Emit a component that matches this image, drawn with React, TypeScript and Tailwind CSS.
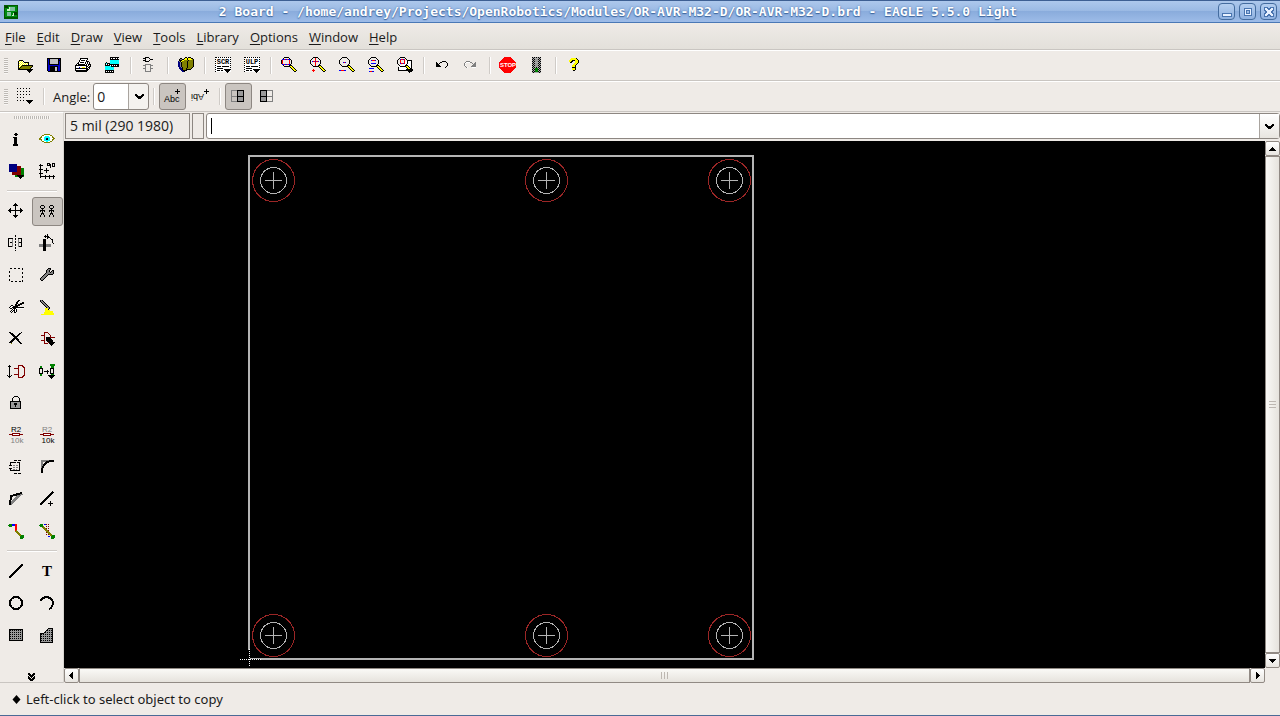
import type { ReactNode } from 'react'

const COLORS: Record<string, string> = {
  k: '#000000',
  w: '#ffffff',
  y: '#ffff00',
  o: '#808000',
  b: '#0000c8',
  n: '#000080',
  r: '#ff0000',
  m: '#800000',
  g: '#808080',
  l: '#c0c0c0',
  c: '#00ffff',
  G: '#008000',
}

// draws a bitmap icon, one character for each pixel
function Pixels({ x, y, rows }: { x: number; y: number; rows: string[] }) {
  const paths: Record<string, string> = {}
  rows.forEach((row, j) =>
    row.split('').forEach((c, i) => {
      if (COLORS[c]) paths[c] = (paths[c] || '') + `M${x + i} ${y + j}h1v1h-1z`
    })
  )
  return (
    <>
      {Object.keys(paths).map((c) => (
        <path key={c} d={paths[c]} fill={COLORS[c]} stroke="none" />
      ))}
    </>
  )
}

function Icon({ children }: { children: ReactNode }) {
  return (
    <svg
      width="21"
      height="21"
      viewBox="0 0 21 21"
      fill="none"
      stroke="#000"
      shapeRendering="crispEdges"
      className="block shrink-0"
      aria-hidden="true"
    >
      {children}
    </svg>
  )
}

const MenuMark = () => <path d="M12 14h7v1h-1v1h-1v1h-1v1h-1v-1h-1v-1h-1v-1h-1z" fill="#000" stroke="none" />

const Lens = ({ children }: { children?: ReactNode }) => (
  <>
    <Pixels
      x={3}
      y={2}
      rows={[
        '...kkkkk........',
        '..k.....k.......',
        '.k.......k......',
        'k.........k.....',
        'k.........k.....',
        'k.........k.....',
        'k.........k.....',
        '.k.......k......',
        '..k.....kkk.....',
        '...kkkkkkyyk....',
        '.........kyyk...',
        '..........kyyk..',
        '...........kyyk.',
        '............kyyk',
        '.............kk.',
      ]}
    />
    {children}
  </>
)

const icons: Record<string, ReactNode> = {
  open: (
    <Pixels
      x={4}
      y={5}
      rows={[
        '.kkkk..........',
        'kywywk.........',
        'kwywywkkkkk....',
        'kywywywywyk....',
        'kwywywywywk....',
        'kywykkkkkkkkkkk',
        'kwykooooooooook',
        'kykooooooooook.',
        'kkooooooooook..',
        'kkkkkkkkkkkkkkk',
        '.........kkkkk.',
        '..........kkk..',
        '...........k...',
      ]}
    />
  ),
  save: (
    <Pixels
      x={4}
      y={3}
      rows={[
        'kkkkkkkkkkkkkk',
        'kbkllllllllkbk',
        'kbkllllllllkkk',
        'kbkllllllllkbk',
        'kbkllllllllkbk',
        'kbkllllllllkbk',
        'kbkkkkkkkkkkbk',
        'kbbbbbbbbbbbbk',
        'kbbkkkkkkkkbbk',
        'kbbkkkkkllkbbk',
        'kbbkkkkkllkbbk',
        'kbbkkkkkllkbbk',
        'kbbkkkkkllkbbk',
        '.kkkkkkkkkkkkk',
      ]}
    />
  ),
  print: (
    <Pixels
      x={3}
      y={3}
      rows={[
        '.....kkkkkkkk...',
        '.....kwwwwwwk...',
        '....kwkkkkwk....',
        '....kwwwwwwkkk..',
        '...kwkkkkwkwkwk.',
        '..kkwwwwwwkwkwk.',
        '.kwkkkkkkkwkwkkk',
        'kkkkkkkkkkkkwkwk',
        'kwwwwwwwwwwkkwkk',
        'kwwwbwwyyywkwkk.',
        'kkkkkkkkkkkkkwk.',
        'kwwwwwwwwwwkkk..',
        'kkkkkkkkkkkkk...',
        '.kkkkkkkkkkk....',
      ]}
    />
  ),
  cam: (
    <Pixels
      x={4}
      y={2}
      rows={[
        '.....kkkkkkkkk',
        '.....kwkwwkwkw',
        '.....kkkkkkkkk',
        '.....ccccccccc',
        '.....ccccccccc',
        '.k...ccccccccc',
        'kckkkccccccccc',
        'kwkwkkkkkkkkkk',
        'kkkkkwkwkwkwkk',
        'cccccckkkkkkkk',
        'ccccccccc.....',
        'ccccccccc.....',
        'ccccccccc.....',
        'kkkkkkkkk.....',
        'kwkwkwkwk.....',
        'kkkkkkkkk.....',
      ]}
    />
  ),
  gate: (
    <Pixels
      x={5}
      y={2}
      rows={[
        '..kkkk....',
        'kkk...k...',
        '..k....kkk',
        'kkk...k...',
        '..kkkk....',
        '..........',
        '..........',
        '..gggggg..',
        'ggg....ggg',
        '..g....g..',
        '..g....g..',
        'ggg....ggg',
        '..g....g..',
        '..g....g..',
        '..gggggg..',
      ]}
    />
  ),
  library: (
    <Pixels
      x={3}
      y={2}
      rows={[
        '.......kk.kkk...',
        '..kk..kyykyyykk.',
        '.kggkkyyykyyyyok',
        '.kkkyyooookooook',
        'ngkyoooookoooook',
        'nngkoooookoooook',
        'nngkoooookoooook',
        'nngkoooookoooook',
        'nngkoooookoooook',
        'nngkoooookoooook',
        '.nngkooookooook.',
        '.nnnkoookooook..',
        '..nnkoookkkkk...',
        '...nnkkkk.......',
        '....nnk.........',
      ]}
    />
  ),
  script: <Sheet label="SCR" />,
  ulp: <Sheet label="ULP" />,
  fit: (
    <Lens>
      <rect x="4.5" y="4.5" width="7" height="5" stroke="#ff0000" />
      <path d="M4 4.5h8M4 9.5h8" stroke="#0000ff" strokeDasharray="2 1" />
    </Lens>
  ),
  zoomIn: (
    <Lens>
      <path d="M8.5 3v8M5 6.5h7" stroke="#ff0000" />
      <path d="M5 6.5h7" stroke="#0000ff" strokeDasharray="1 2" />
      <path d="M6.5 14v3M5 15.5h3" stroke="#ff0000" />
    </Lens>
  ),
  zoomOut: (
    <Lens>
      <path d="M7 7.5h3M3 15.5h7" stroke="#0000ff" />
      <path d="M8 7.5h1M5 15.5h3" stroke="#ff0000" />
    </Lens>
  ),
  redraw: (
    <Lens>
      <path d="M6 5.5h5M6 8.5h5M4 13.5h5M4 16.5h5" stroke="#0000ff" />
      <path d="M7 5.5h3M5 16.5h2" stroke="#ff0000" />
    </Lens>
  ),
  zoomSelect: (
    <>
      <path d="M13 5.5h4.500v10h-13V12" fill="#fff" />
      <Lens>
        <rect x="6.5" y="4.5" width="4" height="4" stroke="#ff0000" />
        <path d="M6 4.5h5M6 8.5h5" stroke="#0000ff" strokeDasharray="1 2" />
      </Lens>
      <MenuMark />
    </>
  ),
  undo: (
    <Pixels
      x={5}
      y={6}
      rows={[
        '......kkkk..',
        'k...kk....k.',
        'kk.k.......k',
        'kkk........k',
        'kkkk.......k',
        'kkkkk.....k.',
        '.........k..',
      ]}
    />
  ),
  redo: (
    <Pixels
      x={4}
      y={6}
      rows={[
        '..gggg......',
        '.gwwwwgg...g',
        'gw......g.gg',
        'g........ggg',
        'gw......gggg',
        '.g.....ggggg',
        '..gw....wwww',
      ]}
    />
  ),
  stop: (
    <>
      <path d="M7 2h7v1h1v1h1v1h1v1h1v1h1v6h-1v1h-1v1h-1v1h-1v1h-1v1h-7v-1h-1v-1h-1v-1h-1v-1h-1v-1h-1v-6h1v-1h1v-1h1v-1h1v-1h1z" fill="#f00" stroke="none" />
      <text x="11" y="12" textAnchor="middle" fontSize="6" fontWeight="bold" fontFamily="Liberation Sans, sans-serif" fill="#fff" stroke="none">
        STOP
      </text>
    </>
  ),
  go: (
    <>
      <path d="M6 2h9v16H6z" fill="#aaa" stroke="none" />
      <path d="M6.5 2v16M8.5 2v16M10.5 2v16M12.5 2v16M14.5 2v16" strokeDasharray="1 1" />
      <path d="M7.5 2v16M13.5 2v16" strokeDasharray="1 1" strokeDashoffset="1" />
      <circle cx="10.5" cy="5.5" r="2" fill="#999" stroke="none" />
      <circle cx="10.5" cy="10" r="2" fill="#999" stroke="none" />
      <circle cx="10.5" cy="15" r="2" fill="#008000" stroke="none" />
    </>
  ),
  help: (
    <Pixels
      x={6}
      y={3}
      rows={[
        '..yyyyyk..',
        '.yyyyyyyk.',
        'yyykkkyyyk',
        'yykk..yyyk',
        '.kk...yyyk',
        '.....yyyk.',
        '....yyyk..',
        '...yyyk...',
        '...yyyk...',
        '...kkkk...',
        '...yyyk...',
        '...yyyk...',
        '....kk....',
      ]}
    />
  ),
  grid: (
    <>
      <path d="M3 2.5h15M3 5.5h15M3 8.5h15M3 11.5h9M3 14.5h9" strokeDasharray="1 2" />
      <MenuMark />
    </>
  ),
  textNormal: (
    <>
      <text x="2" y="16" fontSize="9" fontFamily="Liberation Sans, sans-serif" fill="#000" stroke="none">
        Abc
      </text>
      <path d="M15.5 3v5M13 5.5h5" />
    </>
  ),
  textMirror: (
    <>
      <text x="-14" y="-8" transform="rotate(180)" fontSize="9" fontFamily="Liberation Sans, sans-serif" fill="#000" stroke="none">
        Abi
      </text>
      <path d="M16.5 3v5M14 5.5h5" />
    </>
  ),
  layerRight: (
    <>
      <rect x="3.5" y="4.5" width="12" height="11" stroke="#808080" />
      <rect x="9.5" y="4.5" width="6" height="11" fill="#999" />
      <path d="M3 10.5h6" stroke="#808080" />
      <path d="M9 10.5h7" />
    </>
  ),
  layerLeft: (
    <>
      <rect x="4.5" y="4.5" width="12" height="11" stroke="#808080" />
      <rect x="4.5" y="4.5" width="6" height="11" fill="#999" />
      <path d="M11 10.5h6" stroke="#808080" />
      <path d="M4 10.5h7" />
    </>
  ),
  info: (
    <Pixels
      x={7}
      y={4}
      rows={['..kk..', '.kkkk.', '..kk..', '......', 'kkkk..', '.kkk..', '.kkk..', '.kkk..', '.kkk..', '.kkk..', '.kkk..', 'kkkkk.', 'kkkkk.']}
    />
  ),
  show: (
    <Pixels
      x={2}
      y={5}
      rows={[
        '.....oooooo.....',
        '...oowwwwwwoo...',
        '..owwwccccwwwo..',
        '.oowwccccccwwoo.',
        'oowwwccnkccwwwoo',
        'ooowwcckkccwwoo.',
        '..owwccccccwwo..',
        '...oowwccwwoo...',
        '.....oooooo.....',
      ]}
    />
  ),
  display: (
    <>
      <path d="M9 7h9v9H9z" fill="#008000" stroke="none" />
      <path d="M6 5h9v9H6z" fill="#800000" stroke="none" />
      <path d="M3 3h8v8H3z" fill="#000080" stroke="none" />
      <path d="M11 14h7v1h-1v1h-1v1h-1v1h-1v-1h-1v-1h-1v-1h-1z" fill="#000" stroke="none" />
    </>
  ),
  mark: (
    <>
      <path d="M3.5 3v14M3 15.500h15M2 4.500h4M2 8.500h4M2 12.500h4M8.500 14v4M12.500 14v4M16.500 14v4M9.500 7v5M7 9.500h5" />
      <path d="M10.500 2.500h2v2h-2zM13.500 3v4M15.500 2.500h2v3h-2z" />
    </>
  ),
  move: (
    <Pixels
      x={2}
      y={2}
      rows={[
        '.......k.......',
        '......kkk......',
        '.....kkkkk.....',
        '.......k.......',
        '.......k.......',
        '..k....k....k..',
        '.kk....k....kk.',
        'kkkkkkkkkkkkkkk',
        '.kk....k....kk.',
        '..k....k....k..',
        '.......k.......',
        '.......k.......',
        '.....kkkkk.....',
        '......kkk......',
        '.......k.......',
      ]}
    />
  ),
  copy: (
    <>
      {[3, 12].map((x) => (
        <Pixels key={x} x={x} y={4} rows={['.kkk.', 'k...k', 'k...k', '.kkk.', '..k..', 'kkkkk', 'k.k.k', '..k..', '.kkk.', '.k.k.', 'k...k', 'k...k']} />
      ))}
    </>
  ),
  mirror: (
    <>
      <path d="M2 5.500h5M4 9.500h3M2 13.500h5M2.500 5v9M16 5.500h-4M15 9.500h-3M16 13.500h-4M15.500 5v9" />
      <path d="M6.500 6v8M12.500 6v8" stroke="#808080" />
      <path d="M9.500 2v16" strokeDasharray="2 1" />
    </>
  ),
  rotate: (
    <>
      <path d="M2 11h12v3H2z" fill="#808080" stroke="none" />
      <path d="M6 6h3v12H6z" fill="#000" stroke="none" />
      <path d="M7 3.500h4l4 3 1.500 5M10.500 1v5M8.500 2v3" />
    </>
  ),
  group: <rect x="3.5" y="3.5" width="13" height="13" strokeDasharray="2 2" />,
  change: (
    <Pixels
      x={3}
      y={3}
      rows={[
        '........kkk...',
        '.......kggk...',
        '......kggk..kk',
        '......kggk.kgk',
        '......kgggkggk',
        '.....kgggggggk',
        '....kgggkkkkk.',
        '...kgggk......',
        '..kgggk.......',
        '.kgggk........',
        'kgggk.........',
        'kggk..........',
        '.kk...........',
      ]}
    />
  ),
  cut: (
    <Pixels
      x={3}
      y={3}
      rows={[
        '.........kk....',
        '........kkw....',
        '.......kkw...kk',
        '.......kk..kkkk',
        '......kk.kkkk..',
        '..kk..kkkkkw...',
        '.kwwkkkkk......',
        'kwwkkkkkkkkkkkk',
        '.kk.kkkwwwwwwww',
        '...kwkwk.......',
        '..kwkkwk.......',
        '.kwk.kwk.......',
        '..k..kk........',
      ]}
    />
  ),
  paste: (
    <>
      <path d="M3 3.5l9 9M5 3.5l8 8" />
      <path d="M4 3.5l8 8" stroke="#808080" />
      <path d="M8 11h3v2h2v1h3v2h1v2H4v-1h3v-2h1z" fill="#ff0" stroke="none" />
    </>
  ),
  remove: (
    <Pixels
      x={3}
      y={3}
      rows={[
        'kk..........k',
        '.kkk......kk.',
        '..kkk....kk..',
        '...kkk..kk...',
        '....kkkkk....',
        '.....kkk.....',
        '....kkkkk....',
        '...kkk.kkk...',
        '..kkk...kk...',
        '.kkk.....kk..',
        'kkk.......kk.',
        '..o........kk',
      ]}
    />
  ),
  add: (
    <>
      <path d="M7.500 3.500h3l3 3v5l-3 3h-3zM4 6.500h4M4 11.500h4M13 8.500h5" stroke="#800000" />
      <path d="M9 8h3l4 4v1h2v1h-1v1h-1v1h-1v1h-1v-1h-1v-1h-1v-2h-2v-1H9z" fill="#000" stroke="none" />
    </>
  ),
  pinswap: (
    <>
      <path d="M3.500 4v13M1.500 6.500l2-2 2 2M1.500 14.500l2 2 2-2" />
      <path d="M8 7.500h5M8 13.500h5M12.500 4v13M12 4.500h4l2 2v8l-2 2h-4" stroke="#800000" />
    </>
  ),
  replace: (
    <>
      <path d="M3 5h2v10H3zM14 3h3v13h-3zM13 3h5v2h-5z" fill="#008000" stroke="none" />
      <rect x="2.5" y="7.5" width="3" height="5" fill="#efebe7" />
      <rect x="13.5" y="7.5" width="3" height="5" fill="#efebe7" />
      <path d="M7 10.5h5M10.5 8.5v4" />
      <path d="M11 14h7v1h-1v1h-1v1h-1v1h-1v-1h-1v-1h-1v-1h-1z" fill="#000" stroke="none" />
    </>
  ),
  lock: (
    <>
      <path d="M6.500 9V5.500l2-2h3l2 2V9" />
      <rect x="4.5" y="8.5" width="10" height="7" fill="#999" />
      <path d="M8 10h3v2h-1v2H9v-2H8z" fill="#000" stroke="none" />
    </>
  ),
  name: <Resistor top="#000" bottom="#808080" />,
  value: <Resistor top="#808080" bottom="#000" />,
  smash: (
    <>
      <path d="M4.500 5.500h3M13.500 5v9M13 13.500h-9M4.500 5v3M4.500 12v2M3 8.500h3M3 11.500h3M7 5.500h3M11 5.500h3" />
      <path d="M8 3.500h7M8 16.500h7" strokeDasharray="3 1" />
      <path d="M7 8.500h6M7 10.500h6M7 12.500h4" stroke="#808080" strokeDasharray="2 1" />
    </>
  ),
  miter: (
    <>
      <path d="M5 16V4h12" stroke="#808080" strokeWidth="2" />
      <path d="M5 16v-4l2-4 3-3 4-1h3" strokeWidth="2" />
    </>
  ),
  split: (
    <>
      <path d="M4 15L16 4" stroke="#808080" strokeWidth="3" />
      <path d="M4 16l1-9 11-3" strokeWidth="2" />
    </>
  ),
  optimize: (
    <>
      <path d="M3 16L16 3" strokeWidth="2" />
      <path d="M13.500 12v5M11 14.500h5" />
    </>
  ),
  route: (
    <>
      <path d="M4 4h6" stroke="#0000ff" strokeWidth="2" />
      <path d="M10 3v8" stroke="#ff0000" strokeWidth="2" />
      <path d="M10 10l6 6" stroke="#808000" strokeWidth="2" />
      <circle cx="4.5" cy="4.5" r="2" fill="#008000" stroke="none" />
      <circle cx="16" cy="16" r="2" fill="#008000" stroke="none" />
    </>
  ),
  ripup: (
    <>
      <path d="M4 3.500h6M11 15.500h6" stroke="#0000ff" strokeDasharray="2 1" />
      <path d="M9.500 3v12M11.500 3v12" stroke="#800000" strokeDasharray="1 1" />
      <path d="M4 4l12 12" stroke="#808000" strokeWidth="2" />
      <circle cx="4.5" cy="4.5" r="2" fill="#008000" stroke="none" />
      <circle cx="16" cy="16" r="2" fill="#008000" stroke="none" />
    </>
  ),
  wire: <path d="M3 16L16 3M4 17L17 4M3 17L17 3" />,
  text: (
    <text x="10" y="15" textAnchor="middle" fontSize="15" fontWeight="bold" fontFamily="Liberation Serif, serif" fill="#000" stroke="none">
      T
    </text>
  ),
  circle: <circle cx="10" cy="10" r="6" strokeWidth="2" />,
  arc: <path d="M3.500 8c2-5 10-5 12 0c1.500 3-.5 7-3.500 8" strokeWidth="2" />,
  rect: (
    <>
      <rect x="3.5" y="4.5" width="13" height="11" fill="#999" />
      <path d="M4 5.500h12M4 7.500h12M4 9.500h12M4 11.500h12M4 13.500h12" strokeDasharray="1 1" />
    </>
  ),
  polygon: (
    <>
      <path d="M3.500 17.500v-9h3l5-5h4v14z" fill="#999" />
      <path d="M10 5.500h6M8 7.500h8M4 9.500h12M4 11.500h12M4 13.500h12M4 15.500h12" strokeDasharray="1 1" />
    </>
  ),
}

function Sheet({ label }: { label: string }) {
  return (
    <>
      <path d="M3 2h16v15H3z" fill="#fff" stroke="none" />
      <path d="M3.500 2v15M18.500 2v11M4 2.500h15" strokeDasharray="1 1" />
      <text x="11" y="9" textAnchor="middle" fontSize="7" fontWeight="bold" fontFamily="Liberation Mono, monospace" fill="#000" stroke="none">
        {label}
      </text>
      <path d="M5 11.500h4M10 11.500h7M5 13.500h6M5 15.500h3M9 15.500h2" />
      <MenuMark />
    </>
  )
}

function Resistor({ top, bottom }: { top: string; bottom: string }) {
  return (
    <>
      <text x="10" y="7" textAnchor="middle" fontSize="8" fontFamily="Liberation Sans, sans-serif" fill={top} stroke="none">
        R2
      </text>
      <path d="M3 9.500h14" stroke="#800000" />
      <rect x="6.5" y="8.5" width="7" height="2" fill="#fff" stroke="#800000" />
      <text x="11" y="18" textAnchor="middle" fontSize="8" fontFamily="Liberation Sans, sans-serif" fill={bottom} stroke="none">
        10k
      </text>
    </>
  )
}

const menus = ['File', 'Edit', 'Draw', 'View', 'Tools', 'Library', 'Options', 'Window', 'Help']

const actions = [
  ['open', 'save', 'print', 'cam'],
  ['gate'],
  ['library'],
  ['script', 'ulp'],
  ['fit', 'zoomIn', 'zoomOut', 'redraw', 'zoomSelect'],
  ['undo', 'redo'],
  ['stop', 'go'],
  ['help'],
]

const tools = [
  ['info', 'show', 'display', 'mark'],
  [
    'move', 'copy', 'mirror', 'rotate', 'group', 'change', 'cut', 'paste', 'remove', 'add', 'pinswap', 'replace',
    'lock', '', 'name', 'value', 'smash', 'miter', 'split', 'optimize', 'route', 'ripup',
  ],
  ['wire', 'text', 'circle', 'arc', 'rect', 'polygon'],
]

const windowButtons = [
  { label: 'Minimize', d: 'M4 10h9v3H4z' },
  { label: 'Maximize', d: 'M5 5h7v7H5zM7 7v3h3V7z' },
  { label: 'Close', d: 'M4 4h3v1h1v1h1V5h1V4h3v3h-1v1h-1v1h1v1h1v3h-3v-1H9v-1H8v1H7v1H4v-3h1V9h1V8H5V7H4z' },
]

function ToolButton({ name, active }: { name: string; active?: boolean }) {
  return (
    <button
      type="button"
      aria-label={name}
      aria-pressed={active}
      className={
        active
          ? 'flex h-[27px] w-[27px] items-center justify-center rounded-[3px] border border-[#8d8782] bg-[#cac5c0]'
          : 'flex h-[29px] w-[29px] items-center justify-center'
      }
    >
      <Icon>{icons[name]}</Icon>
    </button>
  )
}

const Separator = () => <span className="mr-[2px] ml-1 h-[17px] w-[2px] border-l border-[#cfcbc7] bg-white" />

const Grip = () => (
  <span className="mr-[2px] ml-1 h-4 w-1 bg-[repeating-linear-gradient(to_bottom,#bdb9b4_0_1px,#f8f6f4_1px_2px)]" />
)

const Chevron = () => (
  <svg width="9" height="7" viewBox="0 0 9 7" shapeRendering="crispEdges" className="pointer-events-none" aria-hidden="true">
    <path d="M0 1h2v1h1v1h3V2h1V1h2v2H8v1H7v1H6v1H3V5H2V4H1V3H0z" />
  </svg>
)

function ScrollButton({ label, d }: { label: string; d: string }) {
  return (
    <button
      type="button"
      aria-label={label}
      className="flex h-[15px] w-[15px] shrink-0 items-center justify-center rounded-[2px] border border-[#918a84] bg-gradient-to-b from-white to-[#e8e5e0]"
    >
      <svg width="7" height="7" viewBox="0 0 7 7" shapeRendering="crispEdges" aria-hidden="true">
        <path d={d} />
      </svg>
    </button>
  )
}

function Board() {
  return (
    <svg className="block h-full w-full" fill="none" shapeRendering="crispEdges" role="img" aria-label="Board">
      <rect x="185" y="15" width="504" height="503" stroke="#b4b4b4" strokeWidth="2" />
      {[39.5, 494.5].map((y) =>
        [209.5, 482.5, 665.5].map((x) => (
          <g key={`${x}-${y}`}>
            <circle cx={x} cy={y} r="21" stroke="#9b2626" />
            <circle cx={x} cy={y} r="13" stroke="#b4b4b4" />
            <path d={`M${x - 8.5} ${y}h17M${x} ${y - 8.5}v17`} stroke="#b4b4b4" />
          </g>
        ))
      )}
      <path d="M185 509v17M176 518.5h21" stroke="#000" strokeWidth="2" />
      <path d="M185.5 508v18M176 518.5h21" stroke="#fff" strokeDasharray="1 1" />
    </svg>
  )
}

export default function App() {
  return (
    <div className="flex h-screen flex-col overflow-hidden border-b border-[#4a6a96] bg-[#efebe7] font-['Open_Sans','Noto_Sans',sans-serif] text-[13px] leading-5 text-[#1a1a1a]">
      <header className="flex h-[23px] shrink-0 items-center border-t border-b border-t-[#3d5f93] border-b-[#4a78b5] bg-[linear-gradient(#adc8ec,#9bbae4_45%,#8aacdc_50%,#9dbce8)] pr-[3px] pl-1">
        <svg width="14" height="14" viewBox="0 0 14 14" shapeRendering="crispEdges" aria-hidden="true">
          <path d="M0 0h14v14H0z" fill="#005a00" />
          <path d="M1 1h12v11H1z" fill="#008a10" />
          <path d="M6 2h5v4H6zM3 7h4v4H3z" fill="#7fbf9f" />
          <path d="M3 4h2v2H3zM9 8h1v3H8v-1h1zM5 2h1v4H5z" fill="#c8f0c8" />
          <path d="M1 1h3v2H1zM10 7h3v3h-3z" fill="#004000" />
        </svg>
        <h1 className="flex-1 text-center font-['DejaVu_Sans_Mono',monospace] text-[13px] font-bold whitespace-pre text-white [text-shadow:0_1px_1px_#3d659d,0_0_2px_#4a75b0]">
          2 Board - /home/andrey/Projects/OpenRobotics/Modules/OR-AVR-M32-D/OR-AVR-M32-D.brd - EAGLE 5.5.0 Light
        </h1>
        <div className="flex gap-1">
          {windowButtons.map(({ label, d }) => (
            <button
              key={label}
              type="button"
              aria-label={label}
              className="h-[17px] w-[17px] rounded-[4px] border border-[#446c9f] bg-gradient-to-b from-[#b4cef0] to-[#8fb1e0]"
            >
              <svg viewBox="1 1 15 15" width="15" height="15" shapeRendering="crispEdges" aria-hidden="true">
                <path d={d} fill="#e8f1ff" stroke="#4a75b0" strokeWidth="1" fillRule="evenodd" />
              </svg>
            </button>
          ))}
        </div>
      </header>

      <nav className="flex h-[27px] shrink-0 items-center gap-[11px] border-b border-[#c9c5c1] bg-gradient-to-b from-[#efebe7] to-[#e3e0da] px-[5px] pt-[2px]">
        {menus.map((menu) => (
          <button key={menu} type="button">
            <span className="underline underline-offset-2">{menu[0]}</span>
            {menu.slice(1)}
          </button>
        ))}
      </nav>

      <div className="flex h-[31px] shrink-0 items-center border-t border-b border-t-white border-b-[#c9c5c1]">
        <Grip />
        {actions.map((group, i) => (
          <div key={group[0]} className="flex items-center">
            {i > 0 && <Separator />}
            {group.map((name) => (
              <ToolButton key={name} name={name} />
            ))}
          </div>
        ))}
      </div>

      <div className="flex h-[31px] shrink-0 items-center border-t border-b border-t-white border-b-[#c9c5c1]">
        <Grip />
        <ToolButton name="grid" />
        <Separator />
        <label htmlFor="angle" className="ml-[6px]">
          Angle:
        </label>
        <div className="relative ml-[3px] flex">
          <select
            id="angle"
            className="h-[27px] w-14 appearance-none rounded-[3px] border border-[#8d8782] bg-[linear-gradient(to_right,#fff_34px,#a9a49f_34px_35px,#f4f2ef_35px)] pl-[3px] text-[14px]"
          >
            <option>0</option>
            <option>45</option>
            <option>90</option>
          </select>
          <span className="pointer-events-none absolute inset-y-0 right-[5px] flex items-center">
            <Chevron />
          </span>
        </div>
        <Separator />
        <div className="flex items-center pl-[2px]">
          <ToolButton name="textNormal" active />
          <ToolButton name="textMirror" />
        </div>
        <Separator />
        <div className="flex items-center pl-[2px]">
          <ToolButton name="layerRight" active />
          <ToolButton name="layerLeft" />
        </div>
      </div>

      <div className="flex min-h-0 flex-1">
        <aside className="flex w-16 shrink-0 flex-col items-center border-t border-r border-b border-t-white border-r-[#d8d5d0] border-b-[#c9c5c1]">
          <span className="mt-[3px] h-[3px] w-9 bg-[repeating-linear-gradient(to_right,#bdb9b4_0_1px,#f8f6f4_1px_2px)]" />
          <div className="mt-[6px] flex flex-col gap-[3px]">
            {tools.map((group, i) => (
              <div key={group[0]} className="flex flex-col gap-[3px]">
                {i > 0 && <span className="mx-[6px] mt-px -mb-px h-[2px] border-t border-[#cfcbc7] bg-white" />}
                <div className={i > 0 ? 'grid grid-cols-[31px_31px] gap-y-[3px] pt-[3px]' : 'grid grid-cols-[31px_31px] gap-y-[3px]'}>
                  {group.map((name) =>
                    name ? (
                      <button
                        key={name}
                        type="button"
                        aria-label={name}
                        className={
                          name === 'copy'
                            ? 'flex h-[29px] items-center justify-center rounded-[3px] border border-[#8d8782] bg-[#cac5c0]'
                            : 'flex h-[29px] items-center justify-center'
                        }
                      >
                        <Icon>{icons[name]}</Icon>
                      </button>
                    ) : (
                      <span key="blank" />
                    )
                  )}
                </div>
              </div>
            ))}
          </div>
          <button type="button" aria-label="More tools" className="mt-auto mb-px">
            <svg width="7" height="8" viewBox="0 0 7 8" fill="none" stroke="#000" shapeRendering="crispEdges" className="block" aria-hidden="true">
              <path d="M0 0l3.500 3.500L7 0M0 4l3.500 3.500L7 4" strokeWidth="2" />
            </svg>
          </button>
        </aside>

        <main className="flex min-w-0 flex-1 flex-col">
          <div className="flex h-[29px] shrink-0 gap-[2px] pt-px pb-[2px]">
            <output className="ml-px w-[125px] border border-[#8d8782] px-1 py-[2px] text-[14px]">5 mil (290 1980)</output>
            <span className="w-3 border border-[#8d8782]" />
            <div className="flex flex-1 items-center rounded-[3px] border border-[#8d8782] bg-white pl-1">
              <span className="h-4 w-px bg-black" />
              <input aria-label="Command" className="min-w-0 flex-1 bg-transparent caret-transparent outline-none" />
              <button type="button" aria-label="History" className="flex h-full w-5 items-center justify-center border-l border-[#a9a49f] bg-gradient-to-b from-white to-[#e8e5e0]">
                <Chevron />
              </button>
            </div>
          </div>

          <div className="flex min-h-0 flex-1">
            <div className="min-w-0 flex-1 overflow-hidden bg-black">
              <Board />
            </div>
            <div className="flex w-[15px] flex-col">
              <ScrollButton label="Scroll up" d="M3 2h1v1h1v1h1v1h1v1H0V5h1V4h1V3h1z" />
              <div className="flex flex-1 flex-col items-center justify-center gap-[2px] border border-[#918a84] bg-gradient-to-r from-[#faf9f6] to-[#e6e3dd]">
                <span className="h-px w-[7px] bg-[#bdb7b1]" />
                <span className="h-px w-[7px] bg-[#bdb7b1]" />
                <span className="h-px w-[7px] bg-[#bdb7b1]" />
              </div>
              <ScrollButton label="Scroll down" d="M0 2h7v1H6v1H5v1H4v1H3V5H2V4H1V3H0z" />
            </div>
          </div>

          <div className="mr-[15px] flex h-[15px] shrink-0">
            <ScrollButton label="Scroll left" d="M1 3h1V2h1V1h1V0h1v7H4V6H3V5H2V4H1z" />
            <div className="flex flex-1 items-center justify-center gap-[2px] border border-[#918a84] bg-gradient-to-b from-[#faf9f6] to-[#e6e3dd]">
              <span className="h-[7px] w-px bg-[#bdb7b1]" />
              <span className="h-[7px] w-px bg-[#bdb7b1]" />
              <span className="h-[7px] w-px bg-[#bdb7b1]" />
            </div>
            <ScrollButton label="Scroll right" d="M2 0h1v1h1v1h1v1h1v1H5v1H4v1H3v1H2z" />
          </div>
        </main>
      </div>

      <footer className="flex h-8 shrink-0 items-center gap-[5px] pl-3">
        <svg width="9" height="9" viewBox="0 0 9 9" aria-hidden="true">
          <path d="M4.5 0L8.5 4.5L4.5 9L0.5 4.5z" />
        </svg>
        <p className="font-['Noto_Sans',sans-serif]">Left-click to select object to copy</p>
      </footer>
    </div>
  )
}
